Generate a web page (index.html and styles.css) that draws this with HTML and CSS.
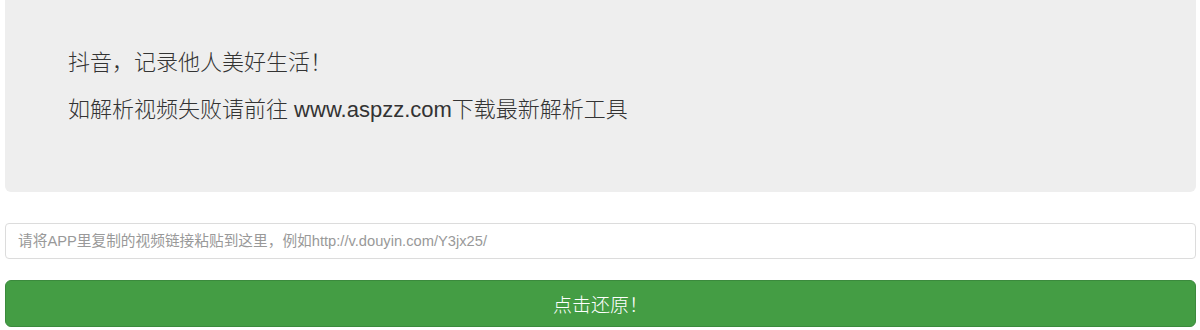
FILE: index.html
```html
<!DOCTYPE html>
<html lang="zh-CN">
<head>
<meta charset="utf-8">
<title>抖音视频解析</title>
<link rel="stylesheet" href="styles.css">
</head>
<body>
<div class="page">
  <div class="jumbotron">
    <p>抖音，记录他人美好生活！</p>
    <p>如解析视频失败请前往 www.aspzz.com下载最新解析工具</p>
  </div>
  <form class="parse-form">
    <input class="url-input" type="text" placeholder="请将APP里复制的视频链接粘贴到这里，例如http://v.douyin.com/Y3jx25/">
    <button class="btn-submit" type="button">点击还原！</button>
  </form>
</div>
</body>
</html>
```

FILE: styles.css
```css
* { box-sizing: border-box; }
html, body {
  margin: 0;
  padding: 0;
  background: #fff;
}
body {
  font-family: "Liberation Sans", "Noto Sans CJK SC", Arial, sans-serif;
  color: #333;
}
.page {
  padding: 0 4px 0 5px;
}
.jumbotron {
  background: #eeeeee;
  border-radius: 0 0 6px 6px;
  padding: 46px 63px 50px;
}
.jumbotron p {
  margin: 0 0 14px;
  font-size: 22px;
  line-height: 33px;
  font-weight: 300;
  color: #333;
}
.jumbotron p:last-child {
  margin-bottom: 16px;
}
.parse-form {
  display: flex;
  flex-direction: column;
  gap: 21px;
  margin-top: 31px;
}
.url-input {
  display: block;
  width: 100%;
  height: 36px;
  padding: 0 12px;
  border: 1px solid #dcdcdc;
  border-radius: 4px;
  font-family: "Liberation Sans", "Noto Sans CJK SC", Arial, sans-serif;
  font-size: 14.7px;
  color: #555;
  background: #fff;
  outline: none;
}
.url-input::placeholder {
  color: #999;
}
.btn-submit {
  display: block;
  width: 100%;
  height: 47px;
  border: 1px solid #3b8a3d;
  border-radius: 6px;
  background: #449d44;
  color: #fff;
  font-family: "Liberation Sans", "Noto Sans CJK SC", Arial, sans-serif;
  font-size: 19px;
  font-weight: 300;
  cursor: pointer;
}
```
